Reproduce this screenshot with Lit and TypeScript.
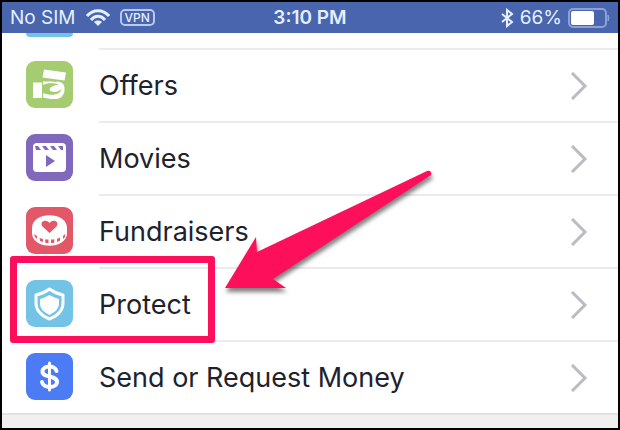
import { LitElement, html, css, svg } from "lit";
import { customElement } from "lit/decorators.js";
import { classMap } from "lit/directives/class-map.js";

const offersIcon = svg`
  <path fill="#fff" d="M18 8.5 40 11.5 38.500 19.5 16.5 16.5Z"/>
  <path fill="#fff" d="M7 21.5H16V37H7Z"/>
  <path fill="#fff" d="M17 20.5H26L29 21C35 20 38 22 38.5 27 39 33 36 37.5 30 38 25 38.5 20 37 17 36.5Z"/>
  <path fill="#a5cc70" d="M17 24C22 21.5 28 22 33 23.5 26 24.500 22.500 27 24 29.5 26 32 33 31 35.5 28 34.5 33.5 26 35.5 17 32Z"/>`;

const moviesIcon = svg`
  <rect x="7" y="9" width="33" height="29" rx="4" fill="#fff"/>
  <path fill="#8069bd" d="M9 12h3l3 4h-5zM16 12h4l3 4h-4zM24 12h4l3 4h-4zM32 12h5v4h-2zM20 21 29 27 20 33Z"/>`;

const fundraisersIcon = svg`
  <path fill="#fff" d="M6 21C6 4 41 4 41 21V26C41 43 6 43 6 26Z"/>
  <path fill="#e25868" d="M23.5 26 16.500 19.500C13 14.5 20 11.5 23.5 16 27 11.5 34 14.5 30.500 19.500Z"/>
  <path fill="#e25868" d="M8 27 11 29V32L9 30ZM13.500 31 17 32V35L14 34ZM19 32.500H22.500V36H19.500ZM25 32.500H28.500L28 36H25ZM31 32 34 30.500V33.500L31 35ZM37 29 39 27V30L37 32Z"/>`;

const protectIcon = svg`
  <path fill="none" stroke="#fff" stroke-width="3" stroke-linejoin="round" d="M23.5 9C19.5 12 15 14 10 15V23C10 31 16 36 23.5 39 31 36 37 31 37 23V15C32 14 27.5 12 23.5 9Z"/>
  <path fill="#fff" d="M23.5 15C20 17 17 18 14 19V23C14 29 18 32 23.5 35 29 32 33 29 33 23V19C30 18 27 17 23.5 15Z"/>`;

const moneyIcon = svg`
  <path fill="none" stroke="#fff" stroke-width="4" stroke-linecap="round" d="M30.5 18C29.5 12 16.5 12 16.5 18.5 16.5 25.5 31 21.5 31 29 31 35.5 17 35.5 16 29"/>
  <path stroke="#fff" stroke-width="3" stroke-linecap="round" d="M23.5 10V37"/>`;

const items = [
  { label: "Offers", tone: "green", icon: offersIcon },
  { label: "Movies", tone: "purple", icon: moviesIcon },
  { label: "Fundraisers", tone: "red", icon: fundraisersIcon },
  { label: "Protect", tone: "sky", icon: protectIcon, marked: true },
  { label: "Send or Request Money", tone: "blue", icon: moneyIcon },
];

@customElement("app-root")
export class AppRoot extends LitElement {
  static styles = css`
    :host {
      display: flex;
      flex-direction: column;
      box-sizing: border-box;
      min-height: 100vh;
      border: 2px solid #000;
      background: #f0f0f0;
      color: #20222b;
      font-family: Inter, "Liberation Sans", sans-serif;
      overflow: hidden;
    }
    .status {
      display: grid;
      grid-template-columns: 1fr auto 1fr;
      align-items: center;
      height: 31px;
      padding: 0 8px;
      background: #4865ad;
      color: #e6efff;
      font-size: 19px;
      line-height: 24px;
    }
    .side {
      display: flex;
      align-items: center;
      gap: 10px;
    }
    .end {
      justify-content: flex-end;
      gap: 6px;
    }
    .time {
      font-weight: 600;
    }
    .vpn {
      box-sizing: border-box;
      height: 17px;
      padding: 0 3px;
      border: 2px solid #b9c9ef;
      border-radius: 5px;
      font-size: 12px;
      font-weight: 500;
      line-height: 13px;
    }
    svg {
      display: block;
      flex: none;
    }
    .menu {
      margin: 0;
      padding: 0;
      list-style: none;
      background: #fff;
      border-bottom: 2px solid #e2e2e4;
    }
    .previous {
      height: 15px;
      overflow: hidden;
      padding-left: 24px;
    }
    .sliver {
      width: 47px;
      height: 4px;
      border-radius: 0 0 9px 9px;
      background: #72c3e6;
    }
    .item {
      position: relative;
    }
    .row {
      display: flex;
      align-items: stretch;
      gap: 26px;
      height: 73px;
      padding-left: 24px;
      color: inherit;
      text-decoration: none;
    }
    .tile {
      align-self: center;
      width: 47px;
      height: 47px;
      border-radius: 9px;
    }
    .green { background: #a5cc70; }
    .purple { background: #8069bd; }
    .red { background: #e25868; }
    .sky { background: #72c3e6; }
    .blue { background: #4c7cf5; }
    .body {
      flex: 1;
      display: flex;
      align-items: center;
      justify-content: space-between;
      padding-right: 30px;
      border-top: 2px solid #ebebed;
      font-size: 27px;
      line-height: 32px;
    }
    .marked::after {
      content: "";
      position: absolute;
      box-sizing: border-box;
      left: 8px;
      top: -11px;
      width: 205px;
      height: 87px;
      border: 7px solid #fe0f5c;
      border-radius: 3px;
      z-index: 1;
      pointer-events: none;
    }
    .arrow {
      position: absolute;
      left: 218px;
      top: -101px;
      z-index: 2;
      overflow: visible;
      pointer-events: none;
      filter: drop-shadow(1px 4px 2px rgb(0 0 0 / 50%));
    }
  `;

  render() {
    return html`
      <header class="status">
        <div class="side">
          <span>No SIM</span>
          <svg width="24" height="18" viewBox="0 0 24 18" fill="none" stroke="#e6efff" stroke-width="3" aria-label="Wi-Fi" role="img">
            <path d="M1 7C7 0 17 0 23 7M5 11C9 6 15 6 19 11" />
            <path d="M8 13C10 11 14 11 16 13L12 17Z" fill="#e6efff" stroke="none" />
          </svg>
          <span class="vpn">VPN</span>
        </div>
        <time class="time">3:10 PM</time>
        <div class="side end">
          <svg width="14" height="20" viewBox="0 0 14 20" fill="none" stroke="#e6efff" stroke-width="2" aria-label="Bluetooth" role="img">
            <path d="M2 6 12 14 7 18V2L12 6 2 14" />
          </svg>
          <span>66%</span>
          <svg width="42" height="20" viewBox="0 0 42 20" aria-label="Battery" role="img">
            <rect x="1" y="1" width="37" height="18" rx="4" fill="none" stroke="#8da1d6" stroke-width="2" />
            <rect x="3" y="3" width="23" height="14" rx="2" fill="#fff" />
            <path d="M40 7Q42 10 40 13Z" fill="#8da1d6" stroke="#8da1d6" />
          </svg>
        </div>
      </header>
      <ul class="menu">
        <li class="previous"><div class="sliver"></div></li>
        ${items.map(
          (item) => html`
            <li class=${classMap({ item: true, marked: !!item.marked })}>
              <a class="row" href="#">
                <svg class="tile ${item.tone}" viewBox="0 0 47 47" aria-hidden="true">${item.icon}</svg>
                <span class="body">
                  <span>${item.label}</span>
                  <svg width="18" height="28" viewBox="0 0 18 28" fill="none" stroke="#bbbbc2" stroke-width="3" aria-hidden="true">
                    <path d="M2 1 15 14 2 27" />
                  </svg>
                </span>
              </a>
              ${item.marked
                ? html`<svg class="arrow" width="216" height="130" viewBox="0 0 216 130" aria-hidden="true">
                    <path fill="#fe0f5c" d="M5 122 36 71 37 86 207 5Q212 4 211 9L53 113 66 122Z" />
                  </svg>`
                : ""}
            </li>
          `
        )}
      </ul>
    `;
  }
}
